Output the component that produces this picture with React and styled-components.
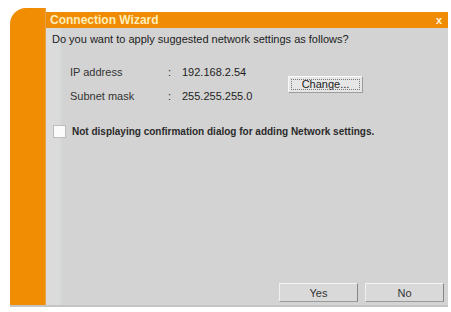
import React, { useState } from 'react';
import styled, { createGlobalStyle } from 'styled-components';

const GlobalStyle = createGlobalStyle`
  html, body {
    margin: 0;
    padding: 0;
    background: #ffffff;
  }
  body {
    font-family: "Liberation Sans", Arial, sans-serif;
    font-size: 11px;
    color: #1e1e1e;
  }
`;

const Page = styled.div`
  padding: 8px 0 0 10px;
`;

const Window = styled.div`
  display: flex;
  width: 438px;
  height: 297px;
  border-bottom: 2px solid #c4c4c4;
`;

const SideStrip = styled.div`
  width: 36px;
  flex-shrink: 0;
  background: #f08d03;
  border-top-left-radius: 16px;
  box-shadow: inset -1px 0 0 #e4a24a;
`;

const Main = styled.div`
  flex: 1;
  display: flex;
  flex-direction: column;
  padding-top: 4px;
`;

const TitleBar = styled.div`
  height: 16px;
  display: flex;
  align-items: center;
  justify-content: space-between;
  background: #ef8b04;
  padding: 0 6px 0 4px;
  color: #ffeeb8;
  font-weight: bold;
  font-size: 12px;
`;

const CloseMark = styled.span`
  font-size: 11px;
  color: #fff6dc;
`;

const Content = styled.div`
  flex: 1;
  display: flex;
  flex-direction: column;
  background: linear-gradient(90deg, #dcdcdc 0, #d9dadb 14px, #d3d3d3 16px, #d3d3d3 100%);
  padding: 4px 4px 3px 6px;
`;

const Question = styled.div`
  line-height: 14px;
  color: #1c1c1c;
`;

const SettingsArea = styled.div`
  display: flex;
  align-items: center;
  margin: 14px 0 0 18px;
`;

const FieldGrid = styled.div`
  display: grid;
  grid-template-columns: 98px 14px 88px;
  grid-auto-rows: 24px;
  align-items: center;
`;

const Label = styled.span`
  color: #333333;
`;

const ChangeButton = styled.button`
  margin-left: 18px;
  width: 75px;
  height: 17px;
  padding: 0;
  font: inherit;
  color: #222;
  background: #e6e6e6;
  border: 1px solid;
  border-color: #fafafa #9c9c9c #9c9c9c #fafafa;
  outline: 1px dotted #777;
  outline-offset: -4px;
`;

const CheckRow = styled.label`
  display: flex;
  align-items: center;
  margin: 16px 0 0 1px;
  height: 14px;
  font-weight: bold;
  font-size: 10px;
  color: #2b2b2b;
`;

const Box = styled.span`
  width: 11px;
  height: 11px;
  margin-right: 6px;
  background: #fbfbfb;
  border: 1px solid #bdbdbd;
`;

const Footer = styled.div`
  margin-top: auto;
  display: flex;
  justify-content: flex-end;
  gap: 7px;
`;

const DialogButton = styled.button`
  width: 79px;
  height: 19px;
  padding: 0;
  font: inherit;
  color: #333;
  background: #d9d9d9;
  border: 1px solid;
  border-color: #f5f5f5 #858585 #9a9a9a #f0f0f0;
`;

export default function App() {
  const [skip, setSkip] = useState(false);

  return (
    <Page>
      <GlobalStyle />
      <Window>
        <SideStrip />
        <Main>
          <TitleBar>
            <span>Connection Wizard</span>
            <CloseMark>x</CloseMark>
          </TitleBar>
          <Content>
            <Question>Do you want to apply suggested network settings as follows?</Question>
            <SettingsArea>
              <FieldGrid>
                <Label>IP address</Label>
                <span>:</span>
                <span>192.168.2.54</span>
                <Label>Subnet mask</Label>
                <span>:</span>
                <span>255.255.255.0</span>
              </FieldGrid>
              <ChangeButton>Change...</ChangeButton>
            </SettingsArea>
            <CheckRow onClick={() => setSkip(!skip)}>
              <Box />
              Not displaying confirmation dialog for adding Network settings.
            </CheckRow>
            <Footer>
              <DialogButton>Yes</DialogButton>
              <DialogButton>No</DialogButton>
            </Footer>
          </Content>
        </Main>
      </Window>
    </Page>
  );
}
